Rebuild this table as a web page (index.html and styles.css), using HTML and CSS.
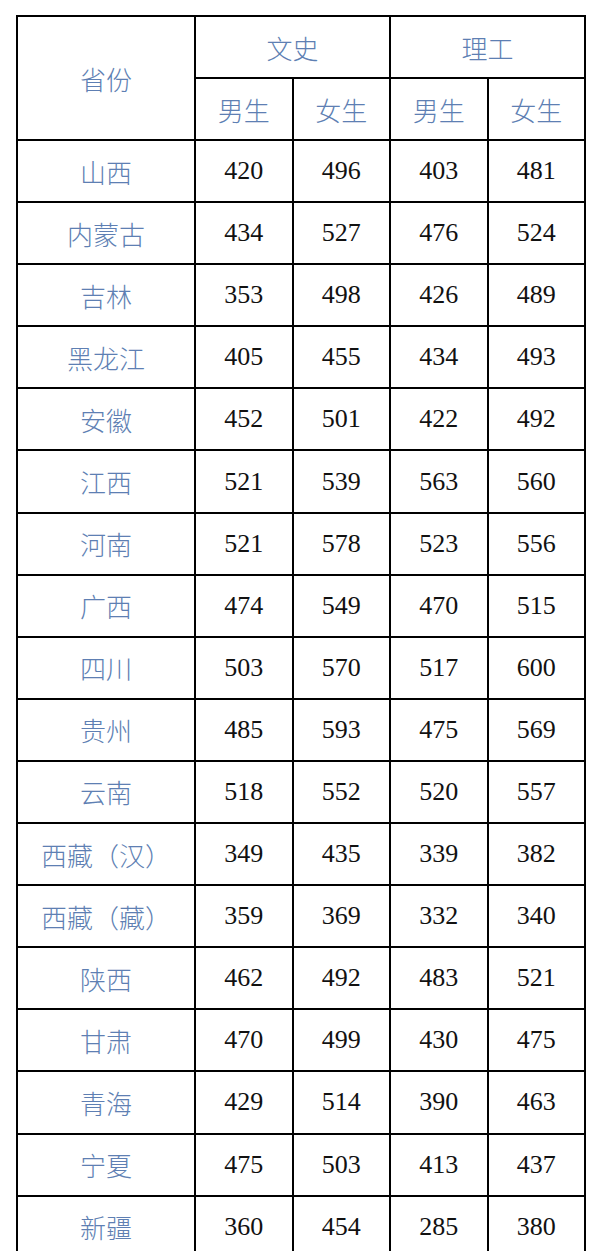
FILE: index.html
```html
<!DOCTYPE html>
<html lang="zh">
<head>
<meta charset="utf-8">
<link rel="stylesheet" href="styles.css">
</head>
<body>
<table class="score">
  <colgroup>
    <col class="c-prov"><col class="c-num"><col class="c-num"><col class="c-num"><col class="c-num">
  </colgroup>
  <thead>
    <tr class="h1">
      <th rowspan="2" class="label">省份</th>
      <th colspan="2" class="label">文史</th>
      <th colspan="2" class="label">理工</th>
    </tr>
    <tr class="h2">
      <th class="label">男生</th><th class="label">女生</th>
      <th class="label">男生</th><th class="label">女生</th>
    </tr>
  </thead>
  <tbody>
    <tr><td class="label">山西</td><td class="num">420</td><td class="num">496</td><td class="num">403</td><td class="num">481</td></tr>
    <tr><td class="label">内蒙古</td><td class="num">434</td><td class="num">527</td><td class="num">476</td><td class="num">524</td></tr>
    <tr><td class="label">吉林</td><td class="num">353</td><td class="num">498</td><td class="num">426</td><td class="num">489</td></tr>
    <tr><td class="label">黑龙江</td><td class="num">405</td><td class="num">455</td><td class="num">434</td><td class="num">493</td></tr>
    <tr><td class="label">安徽</td><td class="num">452</td><td class="num">501</td><td class="num">422</td><td class="num">492</td></tr>
    <tr><td class="label">江西</td><td class="num">521</td><td class="num">539</td><td class="num">563</td><td class="num">560</td></tr>
    <tr><td class="label">河南</td><td class="num">521</td><td class="num">578</td><td class="num">523</td><td class="num">556</td></tr>
    <tr><td class="label">广西</td><td class="num">474</td><td class="num">549</td><td class="num">470</td><td class="num">515</td></tr>
    <tr><td class="label">四川</td><td class="num">503</td><td class="num">570</td><td class="num">517</td><td class="num">600</td></tr>
    <tr><td class="label">贵州</td><td class="num">485</td><td class="num">593</td><td class="num">475</td><td class="num">569</td></tr>
    <tr><td class="label">云南</td><td class="num">518</td><td class="num">552</td><td class="num">520</td><td class="num">557</td></tr>
    <tr><td class="label">西藏（汉）</td><td class="num">349</td><td class="num">435</td><td class="num">339</td><td class="num">382</td></tr>
    <tr><td class="label">西藏（藏）</td><td class="num">359</td><td class="num">369</td><td class="num">332</td><td class="num">340</td></tr>
    <tr><td class="label">陕西</td><td class="num">462</td><td class="num">492</td><td class="num">483</td><td class="num">521</td></tr>
    <tr><td class="label">甘肃</td><td class="num">470</td><td class="num">499</td><td class="num">430</td><td class="num">475</td></tr>
    <tr><td class="label">青海</td><td class="num">429</td><td class="num">514</td><td class="num">390</td><td class="num">463</td></tr>
    <tr><td class="label">宁夏</td><td class="num">475</td><td class="num">503</td><td class="num">413</td><td class="num">437</td></tr>
    <tr><td class="label">新疆</td><td class="num">360</td><td class="num">454</td><td class="num">285</td><td class="num">380</td></tr>
  </tbody>
</table>
</body>
</html>
```

FILE: styles.css
```css
html, body {
  margin: 0;
  padding: 0;
  background: #ffffff;
}
body {
  padding: 15px 0 0 16px;
}
.score {
  border-collapse: collapse;
  table-layout: fixed;
  width: 568px;
}
.c-prov { width: 178px; }
.c-num { width: 97.5px; }
.score th,
.score td {
  border: 2px solid #000;
  padding: 0;
  text-align: center;
  vertical-align: middle;
  font-weight: normal;
}
.score .num {
  font-family: "Liberation Serif", "DejaVu Serif", serif;
  font-size: 26px;
  color: #111;
}
.score .label {
  font-family: "Noto Sans CJK SC", sans-serif;
  font-weight: 300;
  font-size: 26px;
  color: #5e7fb3;
}
.h1 { height: 62px; }
.h2 { height: 62px; }
tbody tr { height: 62.1px; }
```
